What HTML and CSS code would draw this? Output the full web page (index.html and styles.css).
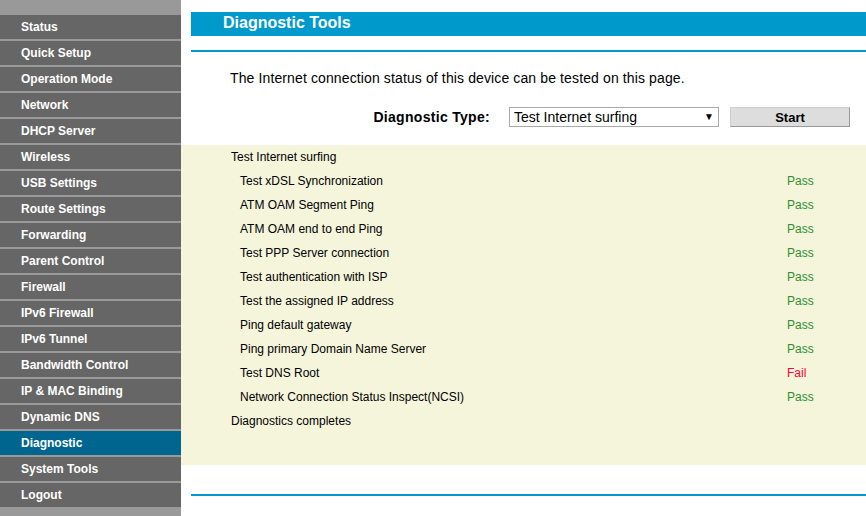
FILE: index.html
```html
<!DOCTYPE html>
<html lang="en">
<head>
  <meta charset="UTF-8">
  <title>Diagnostic Tools</title>
  <link rel="stylesheet" href="styles.css">
</head>
<body>
  <div class="menu">
    <a class="item">Status</a>
    <a class="item">Quick Setup</a>
    <a class="item">Operation Mode</a>
    <a class="item">Network</a>
    <a class="item">DHCP Server</a>
    <a class="item">Wireless</a>
    <a class="item">USB Settings</a>
    <a class="item">Route Settings</a>
    <a class="item">Forwarding</a>
    <a class="item">Parent Control</a>
    <a class="item">Firewall</a>
    <a class="item">IPv6 Firewall</a>
    <a class="item">IPv6 Tunnel</a>
    <a class="item">Bandwidth Control</a>
    <a class="item">IP &amp; MAC Binding</a>
    <a class="item">Dynamic DNS</a>
    <a class="item active">Diagnostic</a>
    <a class="item">System Tools</a>
    <a class="item">Logout</a>
  </div>

  <div class="main">
    <div class="title">Diagnostic Tools</div>
    <div class="rule"></div>

    <p class="intro">The Internet connection status of this device can be tested on this page.</p>

    <div class="form-row">
      <label class="form-label">Diagnostic Type:</label>
      <span class="select-wrap">
        <select class="select">
          <option>Test Internet surfing</option>
          <option>Test xDSL Synchronization</option>
        </select>
      </span>
      <button class="btn">Start</button>
    </div>

    <div class="results">
      <div class="line">Test Internet surfing</div>
      <div class="row"><span class="name">Test xDSL Synchronization</span><span class="pass">Pass</span></div>
      <div class="row"><span class="name">ATM OAM Segment Ping</span><span class="pass">Pass</span></div>
      <div class="row"><span class="name">ATM OAM end to end Ping</span><span class="pass">Pass</span></div>
      <div class="row"><span class="name">Test PPP Server connection</span><span class="pass">Pass</span></div>
      <div class="row"><span class="name">Test authentication with ISP</span><span class="pass">Pass</span></div>
      <div class="row"><span class="name">Test the assigned IP address</span><span class="pass">Pass</span></div>
      <div class="row"><span class="name">Ping default gateway</span><span class="pass">Pass</span></div>
      <div class="row"><span class="name">Ping primary Domain Name Server</span><span class="pass">Pass</span></div>
      <div class="row"><span class="name">Test DNS Root</span><span class="fail">Fail</span></div>
      <div class="row"><span class="name">Network Connection Status Inspect(NCSI)</span><span class="pass">Pass</span></div>
      <div class="line">Diagnostics completes</div>
    </div>

    <div class="rule bottom"></div>
  </div>
</body>
</html>
```

FILE: styles.css
```css
body {
  display: flex;
  margin: 0;
  min-height: 516px;
  background: #fff;
  font-family: "Liberation Sans", Arial, sans-serif;
  color: #000;
}

/* left menu */
.menu {
  display: flex;
  flex-direction: column;
  width: 181px;
  flex-shrink: 0;
  padding-top: 15px;
  background: #999;
}

.item {
  display: block;
  height: 24px;
  line-height: 24px;
  margin-bottom: 2px;
  padding-left: 21px;
  background: #666;
  color: #fff;
  font-size: 12px;
  font-weight: bold;
  cursor: pointer;
}

.item.active {
  background: #006690;
}

/* content */
.main {
  flex: 1;
  padding-top: 12px;
}

.title {
  height: 24px;
  line-height: 22px;
  margin-left: 10px;
  padding-left: 32px;
  background: #0099cc;
  color: #fff;
  font-size: 16px;
  font-weight: bold;
}

.rule {
  height: 2px;
  margin: 14px 0 0 10px;
  background: #0099cc;
}

.rule.bottom {
  margin-top: 29px;
}

.intro {
  margin: 17px 0 0 49px;
  font-size: 14px;
  line-height: 18px;
  letter-spacing: 0.12px;
}

.form-row {
  display: flex;
  align-items: center;
  margin-top: 20px;
}

.form-label {
  width: 309px;
  margin-right: 19px;
  text-align: right;
  font-size: 14px;
  font-weight: bold;
  letter-spacing: 0.3px;
}

.select-wrap {
  position: relative;
  display: inline-block;
}

.select-wrap::after {
  content: "\25BC";
  position: absolute;
  right: 5px;
  top: 4px;
  font-size: 10px;
  color: #000;
  pointer-events: none;
}

.select {
  appearance: none;
  -webkit-appearance: none;
  width: 210px;
  height: 20px;
  margin: 0;
  padding: 0 0 0 4px;
  border: 1px solid #a9a9a9;
  border-radius: 0;
  background: #fff;
  color: #000;
  font-family: "Liberation Sans", Arial, sans-serif;
  font-size: 14px;
}

.btn {
  width: 120px;
  height: 20px;
  margin-left: 11px;
  padding: 0;
  border: 1px solid #cfcfcf;
  border-right-color: #999;
  border-bottom-color: #999;
  background: #dddddd;
  color: #000;
  font-family: "Liberation Sans", Arial, sans-serif;
  font-size: 13px;
  font-weight: bold;
}

.results {
  height: 320px;
  margin-top: 18px;
  padding-left: 50px;
  background: #f5f5dc;
  font-size: 12px;
  line-height: 24px;
}

.row {
  display: flex;
  padding-left: 9px;
}

.name {
  width: 547px;
}

.pass {
  color: #2f8f2f;
}

.fail {
  color: #ff0033;
}
```
